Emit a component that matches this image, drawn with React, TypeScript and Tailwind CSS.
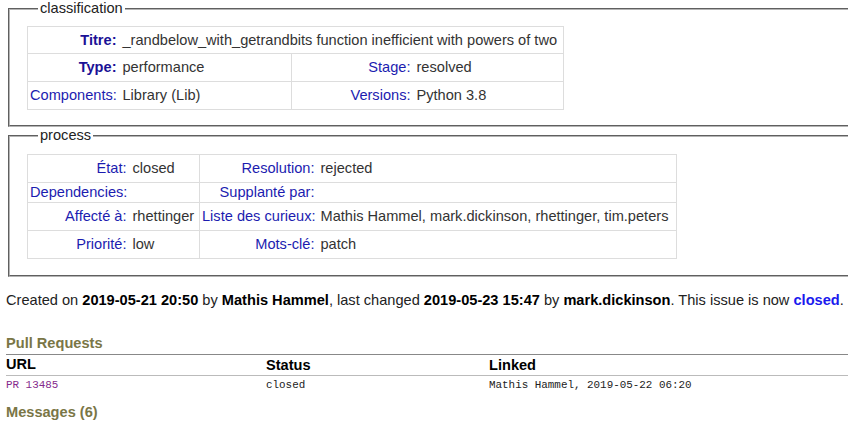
import React from 'react';

const sans = "font-['Liberation_Sans',Arial,sans-serif]";
const mono = "font-['Liberation_Mono','DejaVu_Sans_Mono',monospace]";

function Label({ children, bold }: { children: React.ReactNode; bold?: boolean }) {
  return <span className={bold ? 'font-bold text-[#1a1196]' : 'text-[#1c1cb0]'}>{children}</span>;
}

export default function App() {
  const th = 'text-right align-middle pl-[2px] pr-[2px] font-normal whitespace-nowrap';
  const td = 'text-left align-middle pl-[4px] pr-[2px] text-[#333] whitespace-nowrap';

  return (
    <div className={`w-[848px] h-[422px] overflow-hidden bg-white ${sans} text-[14.6px] leading-[17px] text-[#222]`}>
      <div className="w-[900px] pl-[6px]">
        {/* classification */}
        <fieldset className="ml-[2px] border-2 [border-style:groove] border-[#b4b4b4] pl-[17px] pb-[15px]">
          <legend className="ml-[11px] px-[2px] text-[#222]">classification</legend>
          <table className="mt-[9px] table-fixed border-collapse border border-[#ddd] w-[536px]">
            <colgroup>
              <col className="w-[91px]" />
              <col className="w-[173px]" />
              <col className="w-[121px]" />
              <col className="w-[151px]" />
            </colgroup>
            <tbody>
              <tr className="h-[27px]">
                <th className={th}><Label bold>Titre:</Label></th>
                <td className={td} colSpan={3}>_randbelow_with_getrandbits function inefficient with powers of two</td>
              </tr>
              <tr className="h-[28px] border-t border-[#ddd]">
                <th className={th}><Label bold>Type:</Label></th>
                <td className={td}>performance</td>
                <th className={`${th} border-l border-[#ddd]`}><Label>Stage:</Label></th>
                <td className={td}>resolved</td>
              </tr>
              <tr className="h-[28px] border-t border-[#ddd]">
                <th className={th}><Label>Components:</Label></th>
                <td className={td}>Library (Lib)</td>
                <th className={`${th} border-l border-[#ddd]`}><Label>Versions:</Label></th>
                <td className={td}>Python 3.8</td>
              </tr>
            </tbody>
          </table>
        </fieldset>

        {/* process */}
        <fieldset className="ml-[2px] border-2 [border-style:groove] border-[#b4b4b4] pl-[17px] pb-[16px]">
          <legend className="ml-[11px] px-[2px] text-[#222]">process</legend>
          <table className="mt-[10px] table-fixed border-collapse border border-[#ddd] w-[649px]">
            <colgroup>
              <col className="w-[101px]" />
              <col className="w-[71px]" />
              <col className="w-[117px]" />
              <col className="w-[360px]" />
            </colgroup>
            <tbody>
              <tr className="h-[28px]">
                <th className={th}><Label>État:</Label></th>
                <td className={td}>closed</td>
                <th className={`${th} border-l border-[#ddd]`}><Label>Resolution:</Label></th>
                <td className={td}>rejected</td>
              </tr>
              <tr className="h-[20px] border-t border-[#ddd]">
                <th className={th}><Label>Dependencies:</Label></th>
                <td className={td}></td>
                <th className={`${th} border-l border-[#ddd]`}><Label>Supplanté par:</Label></th>
                <td className={td}></td>
              </tr>
              <tr className="h-[28px] border-t border-[#ddd]">
                <th className={th}><Label>Affecté à:</Label></th>
                <td className={td}>rhettinger</td>
                <th className={`${th} border-l border-[#ddd]`}><Label>Liste des curieux:</Label></th>
                <td className={td}>Mathis Hammel, mark.dickinson, rhettinger, tim.peters</td>
              </tr>
              <tr className="h-[28px] border-t border-[#ddd]">
                <th className={th}><Label>Priorité:</Label></th>
                <td className={td}>low</td>
                <th className={`${th} border-l border-[#ddd]`}><Label>Mots-clé:</Label></th>
                <td className={td}>patch</td>
              </tr>
            </tbody>
          </table>
        </fieldset>

        <p className="mt-[15px] text-[#222]">
          Created on <b className="text-black">2019-05-21 20:50</b> by <b className="text-black">Mathis Hammel</b>, last changed{' '}
          <b className="text-black">2019-05-23 15:47</b> by <b className="text-black">mark.dickinson</b>. This issue is now{' '}
          <b className="text-[#1a1aee]">closed</b>.
        </p>

        <h2 className="mt-[26px] font-bold text-[#7a7646]">Pull Requests</h2>
        <table className="mt-[2px] w-[880px] border-collapse">
          <thead>
            <tr className="border-t border-[#888] border-b border-b-[#bbb]">
              <th className="w-[260px] text-left font-bold text-black pt-[1px] pb-[2px]">URL</th>
              <th className="w-[223px] text-left font-bold text-black">Status</th>
              <th className="text-left font-bold text-black">Linked</th>
            </tr>
          </thead>
          <tbody>
            <tr className={`${mono} text-[10.9px] leading-[14px]`}>
              <td className="pt-[2px] text-[#852a8c]">PR 13485</td>
              <td className="pt-[2px] text-[#222]">closed</td>
              <td className="pt-[2px] text-[#222]">Mathis Hammel, 2019-05-22 06:20</td>
            </tr>
          </tbody>
        </table>

        <h2 className="mt-[12px] font-bold text-[#7a7646]">Messages (6)</h2>
      </div>
    </div>
  );
}
